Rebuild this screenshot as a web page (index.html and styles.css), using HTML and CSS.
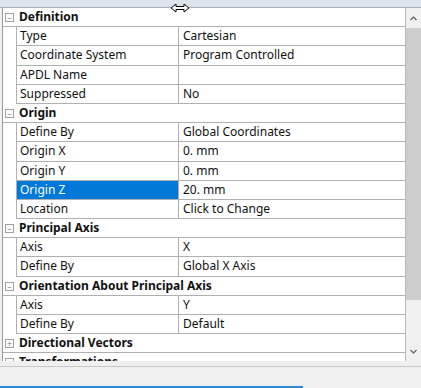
FILE: index.html
```html
<!DOCTYPE html>
<html>
    <head>
        <meta charset="UTF-8">
        <title>Details</title>
        <link rel="stylesheet" href="styles.css">
    </head>
    <body>
        <div class="caption"></div>

        <div class="panel">
            <div class="grid">
                <!--   Definition   -->
                <div class="group"><span class="box">−</span><span class="gname">Definition</span></div>
                <div class="row"><span class="name">Type</span><span class="val">Cartesian</span></div>
                <div class="row"><span class="name">Coordinate System</span><span class="val">Program Controlled</span></div>
                <div class="row"><span class="name">APDL Name</span><span class="val"></span></div>
                <div class="row"><span class="name">Suppressed</span><span class="val">No</span></div>
                <!--   Origin   -->
                <div class="group"><span class="box">−</span><span class="gname">Origin</span></div>
                <div class="row"><span class="name">Define By</span><span class="val">Global Coordinates</span></div>
                <div class="row"><span class="name">Origin X</span><span class="val">0. mm</span></div>
                <div class="row"><span class="name">Origin Y</span><span class="val">0. mm</span></div>
                <div class="row"><span class="name sel">Origin Z</span><span class="val">20. mm</span></div>
                <div class="row"><span class="name">Location</span><span class="val">Click to Change</span></div>
                <!--   Principal Axis   -->
                <div class="group"><span class="box">−</span><span class="gname">Principal Axis</span></div>
                <div class="row"><span class="name">Axis</span><span class="val">X</span></div>
                <div class="row"><span class="name">Define By</span><span class="val">Global X Axis</span></div>
                <!--   Orientation   -->
                <div class="group"><span class="box">−</span><span class="gname">Orientation About Principal Axis</span></div>
                <div class="row"><span class="name">Axis</span><span class="val">Y</span></div>
                <div class="row"><span class="name">Define By</span><span class="val">Default</span></div>
                <!--   collapsed groups   -->
                <div class="group"><span class="box">+</span><span class="gname">Directional Vectors</span></div>
                <div class="group"><span class="box">−</span><span class="gname">Transformations</span></div>
            </div>
            <div class="scroll">
                <div class="arrow">
                    <svg width="7" height="5" viewBox="0 0 7 5"><path d="M0.5 4 L3.5 1 L6.5 4" fill="none" stroke="#606060" stroke-width="1.2"/></svg>
                </div>
                <div class="thumb"></div>
                <div class="track"></div>
                <div class="arrow">
                    <svg width="7" height="5" viewBox="0 0 7 5"><path d="M0.5 1 L3.5 4 L6.5 1" fill="none" stroke="#606060" stroke-width="1.2"/></svg>
                </div>
            </div>
        </div>

        <div class="footer">
            <div class="tabs"><span class="tabline"></span></div>
        </div>

        <svg class="cursor" width="20" height="10" viewBox="0 0 20 10">
            <path d="M1 5 L6 1 L6 3.5 L14 3.5 L14 1 L19 5 L14 9 L14 6.5 L6 6.5 L6 9 Z" fill="#fff" stroke="#000" stroke-width="1"/>
        </svg>
    </body>
</html>
```

FILE: styles.css
```css
body {
  margin: 0;
  width: 421px;
  height: 388px;
  overflow: hidden;
  background: #f0f0f0;
  font-family: "Noto Sans", "Open Sans", sans-serif;
  font-size: 12px;
  color: #111;
  position: relative;
}

.caption {
  height: 7px;
  background: #dde4ec;
  border-bottom: 1px solid #a9b2bc;
}

.panel {
  display: flex;
  height: 353px;
  overflow: hidden;
  border-left: 2px solid #f0f0f0;
}

.grid {
  width: 403px;
  background: #fff;
  border-left: 1px solid #9a9a9a;
  border-right: 1px solid #b9b9b9;
}

.row,
.group {
  display: flex;
  height: 18.2px;
  line-height: 18px;
  border-bottom: 1px solid #b0b0b0;
  margin-left: 13px;
}

.group {
  margin-left: 0;
  font-weight: bold;
}

.box {
  width: 7px;
  height: 7px;
  margin: 5px 5px 0 2px;
  border: 1px solid #a0a0a0;
  font-size: 8px;
  line-height: 7px;
  text-align: center;
  color: #777;
  font-weight: normal;
}

.name {
  width: 158px;
  padding-left: 3px;
  border-left: 1px solid #b0b0b0;
  border-right: 1px solid #b0b0b0;
}

.name.sel {
  background: #0078d7;
  color: #fff;
}

.val {
  flex: 1;
  padding-left: 4px;
}

.scroll {
  width: 15px;
  display: flex;
  flex-direction: column;
  background: #f0f0f0;
}

.arrow {
  height: 20px;
  display: flex;
  align-items: center;
  justify-content: center;
}

.thumb {
  height: 272px;
  background: #cdcdcd;
}

.track {
  flex: 1;
}

.footer {
  height: 27px;
}

.tabs {
  margin-top: 5px;
  height: 21px;
  border-top: 1px solid #c8c8c8;
  position: relative;
}

.tabline {
  position: absolute;
  left: 0;
  bottom: 0;
  width: 303px;
  height: 2px;
  background: #2a8ad4;
}

.cursor {
  position: absolute;
  left: 170px;
  top: 3px;
}
```
